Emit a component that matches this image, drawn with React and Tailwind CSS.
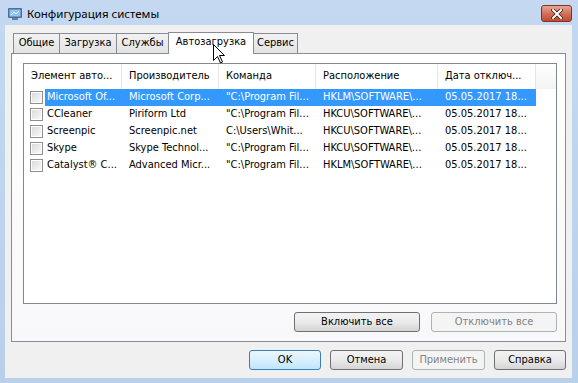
import React from 'react';

const rows = [
  ['Microsoft Of...', 'Microsoft Corp...', '"C:\\Program Fil...', 'HKLM\\SOFTWARE\\...', '05.05.2017 18...'],
  ['CCleaner', 'Piriform Ltd', '"C:\\Program Fil...', 'HKCU\\SOFTWARE\\...', '05.05.2017 18...'],
  ['Screenpic', 'Screenpic.net', 'C:\\Users\\Whit...', 'HKCU\\SOFTWARE\\...', '05.05.2017 18...'],
  ['Skype', 'Skype Technol...', '"C:\\Program Fil...', 'HKCU\\SOFTWARE\\...', '05.05.2017 18...'],
  ['Catalyst® C...', 'Advanced Micr...', '"C:\\Program Fil...', 'HKLM\\SOFTWARE\\...', '05.05.2017 18...'],
];

const headers = ['Элемент авто...', 'Производитель', 'Команда', 'Расположение', 'Дата отключ...'];
const colW = ['w-[98px]', 'w-[97px]', 'w-[97px]', 'w-[122px]', 'w-[98px]'];

function Checkbox() {
  return (
    <div className="w-[13px] h-[13px] border border-[#8f8f8f] bg-white p-[1px] shrink-0">
      <div className="w-full h-full bg-gradient-to-br from-[#dcdcdc] to-[#f8f8f8]" />
    </div>
  );
}

function Button({ children, disabled, primary, className = '' }) {
  let look = 'border-[#707070] bg-gradient-to-b from-[#f2f2f2] via-[#ebebeb] to-[#d4d4d4] text-black';
  if (disabled) look = 'border-[#adb2b5] bg-[#f4f4f4] text-[#838383]';
  if (primary) look = 'border-[#3c7fb1] bg-gradient-to-b from-[#eaf6fd] via-[#d9f0fc] to-[#bee6fd] text-black';
  return (
    <div className={`h-[20px] border rounded-[3px] flex items-center justify-center text-[11px] ${look} ${className}`}>
      {children}
    </div>
  );
}

function Tab({ label, active, className = '' }) {
  if (active) {
    return (
      <div className={`relative z-10 h-[22px] -mb-px bg-white border border-b-0 border-[#898c95] flex items-center justify-center pb-[2px] ${className}`}>
        {label}
      </div>
    );
  }
  return (
    <div className={`h-[20px] border border-b-0 border-[#898c95] -ml-px first:ml-0 bg-gradient-to-b from-[#f2f2f2] to-[#e3e3e3] flex items-center justify-center ${className}`}>
      {label}
    </div>
  );
}

export default function App() {
  return (
    <div
      className="w-[578px] h-[383px] bg-gradient-to-b from-[#c4d9f1] to-[#b8d0ea] flex flex-col text-[11px] text-black"
      style={{ fontFamily: '"DejaVu Sans Condensed", "DejaVu Sans", sans-serif' }}
    >
      {/* Title bar */}
      <div className="h-[25px] flex items-start shrink-0">
        <svg width="16" height="14" viewBox="0 0 16 14" className="ml-[7px] mt-[7px]">
          <rect x="1" y="1" width="14" height="10" rx="1" fill="#4a6f9e" />
          <rect x="2.5" y="2.5" width="11" height="7" fill="#8fc6f2" />
          <path d="M4 8 L7 5 L9 7 L12 4" stroke="#ffffff" strokeWidth="1" fill="none" />
          <rect x="5" y="11" width="6" height="2" fill="#6d7f95" />
        </svg>
        <span
          className="ml-[4px] mt-[5px] text-[11.5px] text-black"
          style={{ fontFamily: '"Noto Sans", sans-serif' }}
        >
          Конфигурация системы
        </span>
        <div className="ml-auto mr-[6px] mt-[5px] w-[31px] h-[17px] rounded-[3px] border border-[#7a3526] bg-gradient-to-b from-[#e8a594] via-[#d4705a] to-[#c24a30] flex items-center justify-center">
          <svg width="12" height="10" viewBox="0 0 12 10">
            <path d="M2 1 L10 9 M10 1 L2 9" stroke="#3a1e18" strokeWidth="3.6" strokeLinecap="square" />
            <path d="M2 1 L10 9 M10 1 L2 9" stroke="#ffffff" strokeWidth="2" strokeLinecap="square" />
          </svg>
        </div>
      </div>

      {/* Client area */}
      <div className="flex-1 ml-[5px] mr-[6px] mb-[5px] bg-[#f0f0f0] flex flex-col px-[6px] pt-[6px]">
        {/* Tabs */}
        <div className="flex items-end h-[22px] pl-[2px]">
          <Tab label="Общие" className="w-[47px]" />
          <Tab label="Загрузка" className="w-[58px]" />
          <Tab label="Службы" className="w-[53px]" />
          <Tab label="Автозагрузка" active className="w-[86px] -ml-px" />
          <Tab label="Сервис" className="w-[45px]" />
        </div>

        {/* Tab panel */}
        <div className="h-[289px] border border-[#898c95] bg-gradient-to-b from-white to-[#f8f8fa] flex flex-col pl-[11px] pr-[8px] pt-[9px]">
          {/* List view */}
          <div className="h-[241px] border border-[#828790] bg-white flex flex-col overflow-hidden">
            <div className="h-[25px] flex shrink-0">
              {headers.map((h, i) => (
                <div
                  key={h}
                  className={`${colW[i]} shrink-0 border-r border-[#e5e5e5] flex items-center pl-[7px] whitespace-nowrap overflow-hidden`}
                >
                  {h}
                </div>
              ))}
              <div className="flex-1 bg-gradient-to-b from-white to-[#f3f3f3]" />
            </div>
            {rows.map((r, ri) => (
              <div key={ri} className="h-[17px] flex items-center">
                <div className="w-[98px] shrink-0 flex items-center pl-[6px] h-full">
                  <Checkbox />
                  <div
                    className={`ml-[2px] h-full flex-1 flex items-center pl-[2px] whitespace-nowrap overflow-hidden ${ri === 0 ? 'bg-[#3399ff] text-white' : ''}`}
                  >
                    {r[0]}
                  </div>
                </div>
                {r.slice(1).map((c, ci) => (
                  <div
                    key={ci}
                    className={`${colW[ci + 1]} shrink-0 h-full flex items-center pl-[7px] whitespace-nowrap overflow-hidden ${ri === 0 ? 'bg-[#3399ff] text-white' : ''}`}
                  >
                    {c}
                  </div>
                ))}
              </div>
            ))}
          </div>

          <div className="flex justify-end gap-[11px] mt-[8px]">
            <Button className="w-[126px]">Включить все</Button>
            <Button disabled className="w-[126px]">Отключить все</Button>
          </div>
        </div>

        {/* Dialog buttons */}
        <div className="flex justify-end gap-[9px] mt-[8px]">
          <Button primary className="w-[72px]">OK</Button>
          <Button className="w-[73px]">Отмена</Button>
          <Button disabled className="w-[73px]">Применить</Button>
          <Button className="w-[72px]">Справка</Button>
        </div>
      </div>

      {/* Mouse cursor */}
      <svg width="13" height="20" viewBox="0 0 13 20" className="absolute left-[213px] top-[44px] z-20">
        <path d="M0.5 0.5 L0.5 16.5 L4.5 12.5 L7.5 19 L9.5 18 L6.5 11.5 L11.5 11.5 Z" fill="#ffffff" stroke="#000000" strokeWidth="1" strokeLinejoin="miter" />
      </svg>
    </div>
  );
}
